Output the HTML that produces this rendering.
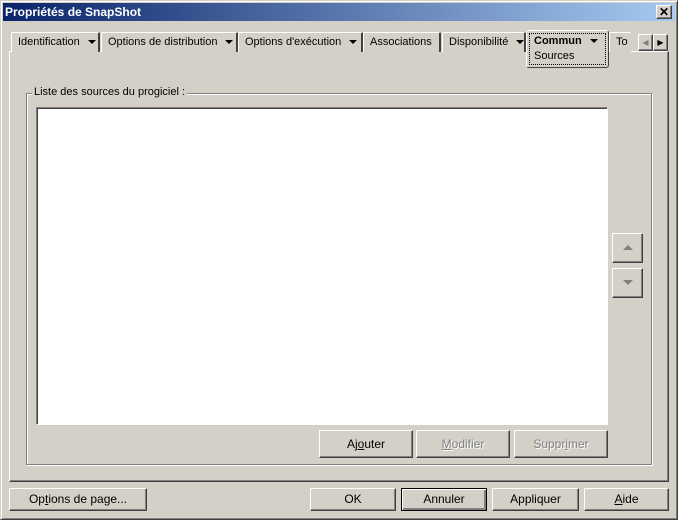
<!DOCTYPE html>
<html><head><style>
*{box-sizing:border-box}
body{margin:0;width:678px;height:520px;background:#d4d0c8;font-family:"Liberation Sans",sans-serif;font-size:11px;color:#000;position:relative;overflow:hidden}
.a{position:absolute}
.win{left:0;top:0;width:678px;height:520px;border:1px solid;border-color:#d4d0c8 #404040 #404040 #d4d0c8;box-shadow:inset 1px 1px #fff,inset -1px -1px #808080}
.title{left:3px;top:3px;width:672px;height:18px;background:linear-gradient(90deg,#0a246a,#a6caf0);color:#fff;font-weight:bold;font-size:12px;line-height:18px;padding-left:2px}
.btn{position:absolute;background:#d4d0c8;border:1px solid;border-color:#fff #404040 #404040 #fff;box-shadow:inset -1px -1px #808080;text-align:center;line-height:21px;font-size:12px;white-space:nowrap}
.dis{color:#808080;text-shadow:1px 1px #fff}
.tab{position:absolute;top:32px;height:20px;border-top:1px solid #fff;border-left:1px solid #fff;border-right:2px solid #404040;border-radius:2px 2px 0 0;line-height:19px;font-size:11px;padding-left:6px;background:#d4d0c8;white-space:nowrap}
.tri{display:inline-block;width:0;height:0;border-left:4px solid transparent;border-right:4px solid transparent;border-top:4px solid #000;vertical-align:middle;margin-left:8px}
.up,.dn{display:inline-block;width:0;height:0;border-left:5px solid transparent;border-right:5px solid transparent;vertical-align:middle}
.up{border-bottom:5px solid #808080}.dn{border-top:5px solid #808080}
</style></head><body>
<div class="a win"></div>
<div class="a title">Propriétés de SnapShot</div>
<div class="btn" style="left:656px;top:5px;width:16px;height:14px;line-height:12px;font-size:12px;font-weight:bold">✕</div>
<div class="a" style="left:9px;top:51px;width:660px;height:431px;border:1px solid;border-color:#fff #404040 #404040 #fff;box-shadow:inset -1px -1px #808080"></div>
<div class="tab" style="left:11px;width:89px">Identification<span class="tri"></span></div>
<div class="tab" style="left:101px;width:137px">Options de distribution<span class="tri"></span></div>
<div class="tab" style="left:238px;width:125px">Options d'exécution<span class="tri"></span></div>
<div class="tab" style="left:363px;width:78px">Associations</div>
<div class="tab" style="left:442px;width:84px">Disponibilité<span class="tri"></span></div>
<div class="tab" style="left:609px;width:22px;border-right:none;overflow:hidden">To</div>
<div class="a" style="left:526px;top:30px;width:83px;height:38px;background:#d4d0c8;border:1px solid;border-color:#fff #404040 #404040 #fff;border-radius:3px"></div>
<div class="a" style="left:529px;top:33px;width:77px;height:32px;border:1px dotted #000;padding-left:4px;line-height:15px;white-space:nowrap"><b style="font-size:11px">Commun</b><span class="tri" style="margin-left:8px"></span><br>Sources</div>
<div class="btn" style="left:638px;top:34px;width:15px;height:17px;line-height:15px;color:#808080;font-size:8px">◀</div>
<div class="btn" style="left:653px;top:34px;width:15px;height:17px;line-height:15px;font-size:8px">▶</div>
<div class="a" style="left:26px;top:93px;width:626px;height:372px;border:1px solid #808080;box-shadow:1px 1px #fff,inset 1px 1px #fff"></div>
<div class="a" style="left:32px;top:86px;background:#d4d0c8;padding:0 2px;font-size:11px">Liste des sources du progiciel :</div>
<div class="a" style="left:36px;top:107px;width:572px;height:318px;background:#fff;border:1px solid;border-color:#808080 #fff #fff #808080;box-shadow:inset 1px 1px #404040"></div>
<div class="btn" style="left:319px;top:430px;width:94px;height:28px;line-height:26px">Aj<u>o</u>uter</div>
<div class="btn dis" style="left:416px;top:430px;width:94px;height:28px;line-height:26px"><u>M</u>odifier</div>
<div class="btn dis" style="left:514px;top:430px;width:94px;height:28px;line-height:26px">Suppr<u>i</u>mer</div>
<div class="btn" style="left:612px;top:233px;width:31px;height:30px;line-height:26px"><span class="up"></span></div>
<div class="btn" style="left:612px;top:268px;width:31px;height:30px;line-height:26px"><span class="dn"></span></div>
<div class="btn" style="left:9px;top:488px;width:138px;height:23px">Op<u>t</u>ions de page...</div>
<div class="btn" style="left:310px;top:488px;width:86px;height:23px">OK</div>
<div class="btn" style="left:401px;top:488px;width:86px;height:23px;border-color:#000;box-shadow:inset 1px 1px #fff,inset -2px -2px #808080">Annuler</div>
<div class="btn" style="left:492px;top:488px;width:87px;height:23px">Appliquer</div>
<div class="btn" style="left:584px;top:488px;width:85px;height:23px"><u>A</u>ide</div>
</body></html>
